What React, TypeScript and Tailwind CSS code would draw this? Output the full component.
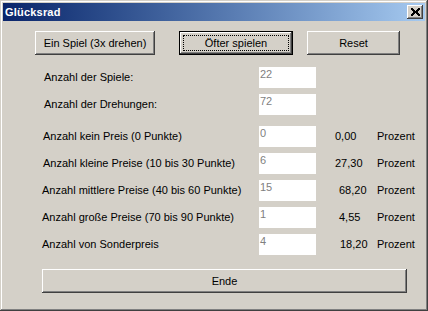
import React from "react";

const bevel =
  "shadow-[inset_-1px_-1px_#404040,inset_1px_1px_#ffffff,inset_-2px_-2px_#808080,inset_2px_2px_#d4d0c8]";

function Btn({ label, className = "" }: { label: string; className?: string }) {
  return (
    <button
      className={`h-[24px] bg-[#d4d0c8] text-black text-[11px] leading-none flex items-center justify-center ${bevel} ${className}`}
    >
      {label}
    </button>
  );
}

function CloseButton() {
  // heavy X glyph, 9x8 pixels
  const rows = [
    "##.....##",
    "###...###",
    ".###.###.",
    "..#####..",
    "..#####..",
    ".###.###.",
    "###...###",
    "##.....##",
  ];
  return (
    <div className={`w-[16px] h-[14px] bg-[#d4d0c8] flex items-center justify-center ${bevel}`}>
      <svg width="9" height="8" viewBox="0 0 9 8" shapeRendering="crispEdges">
        {rows.map((r, y) =>
          r.split("").map((c, x) =>
            c === "#" ? <rect key={`${x}-${y}`} x={x} y={y} width="1" height="1" fill="#000" /> : null
          )
        )}
      </svg>
    </div>
  );
}

type Row = { label: string; value: string; pct?: string; pctPad?: string; labelPad: string; mt: string };

const rows: Row[] = [
  { label: "Anzahl der Spiele:", value: "22", labelPad: "pl-[41px] w-[256px]", mt: "mt-[12px]" },
  { label: "Anzahl der Drehungen:", value: "72", labelPad: "pl-[41px] w-[256px]", mt: "mt-[6px]" },
  { label: "Anzahl kein Preis (0 Punkte)", value: "0", pct: "0,00", pctPad: "pl-0", labelPad: "pl-[40px] w-[256px]", mt: "mt-[11px]" },
  { label: "Anzahl kleine Preise (10 bis 30 Punkte)", value: "6", pct: "27,30", pctPad: "pl-0", labelPad: "pl-[40px] w-[256px]", mt: "mt-[6px]" },
  { label: "Anzahl mittlere Preise (40 bis 60 Punkte)", value: "15", pct: "68,20", pctPad: "pl-[4px]", labelPad: "pl-[39px] w-[256px]", mt: "mt-[6px]" },
  { label: "Anzahl große Preise (70 bis 90 Punkte)", value: "1", pct: "4,55", pctPad: "pl-[4px]", labelPad: "pl-[39px] w-[256px]", mt: "mt-[6px]" },
  { label: "Anzahl von Sonderpreis", value: "4", pct: "18,20", pctPad: "pl-[5px]", labelPad: "pl-[39px] w-[256px]", mt: "mt-[6px]" },
];

export default function App() {
  return (
    <div
      className="w-[428px] h-[311px] bg-[#d4d0c8] p-[3px] flex flex-col shadow-[inset_-1px_-1px_#404040,inset_1px_1px_#d4d0c8,inset_-2px_-2px_#808080,inset_2px_2px_#ffffff]"
      style={{ fontFamily: '"Liberation Sans", Arial, sans-serif' }}
    >
      <div className="h-[18px] flex items-center justify-between bg-linear-to-r from-[#0a246a] to-[#a6caf0] pl-[2px] pr-[2px]">
        <span className="text-white font-bold text-[11px] leading-none tracking-[0.2px]">Glücksrad</span>
        <CloseButton />
      </div>

      <div className="flex-1 flex flex-col text-[11px] text-black">
        <div className="flex mt-[10px]">
          <Btn label="Ein Spiel (3x drehen)" className="ml-[32px] w-[120px]" />
          <button
            className={`relative ml-[24px] w-[114px] h-[24px] bg-[#d4d0c8] text-black text-[11px] leading-none flex items-center justify-center border border-black ${bevel}`}
          >
            <span className="absolute inset-[3px] border border-dotted border-black" />
            Öfter spielen
          </button>
          <Btn label="Reset" className="ml-[14px] w-[93px]" />
        </div>

        {rows.map((r) => (
          <div key={r.label} className={`flex items-center h-[21px] ${r.mt}`}>
            <div className={`${r.labelPad} leading-none whitespace-nowrap`}>{r.label}</div>
            <div className="w-[57px] h-[21px] bg-white text-[#7f7f7f] pl-[1px] pt-[1px] leading-[13px]">{r.value}</div>
            {r.pct && (
              <>
                <div className={`ml-[19px] w-[42px] ${r.pctPad} leading-none`}>{r.pct}</div>
                <div className="leading-none">Prozent</div>
              </>
            )}
          </div>
        ))}

        <div className="mt-[14px]">
          <Btn label="Ende" className="ml-[39px] w-[365px]" />
        </div>
      </div>
    </div>
  );
}
